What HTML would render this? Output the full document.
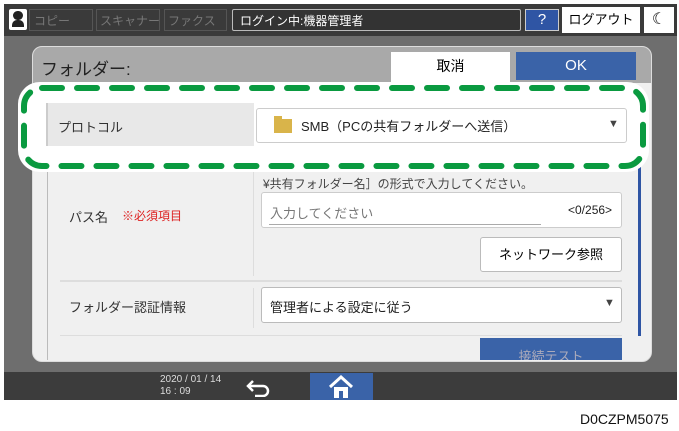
<!DOCTYPE html>
<html><head><meta charset="utf-8"><style>
*{margin:0;padding:0;box-sizing:border-box}
body{width:679px;height:431px;background:#fff;position:relative;overflow:hidden;font-family:"Liberation Sans","Noto Sans CJK JP",sans-serif}
.a{position:absolute}
.t{position:absolute;white-space:nowrap}
</style></head><body>
<div class="a" style="left:4px;top:4px;width:673px;height:396px;background:#6e6e6e"></div>
<!-- top bar -->
<div class="a" style="left:4px;top:4px;width:673px;height:32px;background:#3a3a3a"></div>
<div class="a" style="left:9px;top:9px;width:18px;height:21px;background:#fff;border-radius:2px"></div>
<div class="a" style="left:13px;top:11px;width:10px;height:9px;background:#222;border-radius:5px"></div>
<div class="a" style="left:12px;top:20px;width:12px;height:7px;background:#222;border-radius:5px 5px 0 0"></div>
<div class="a" style="left:29px;top:9px;width:64px;height:22px;border:1px solid #555"></div><div class="t" style="left:34px;top:12px;font-size:12px;color:#777">コピー</div>
<div class="a" style="left:96px;top:9px;width:64px;height:22px;border:1px solid #555"></div><div class="t" style="left:100px;top:12px;font-size:12px;color:#777">スキャナー</div>
<div class="a" style="left:164px;top:9px;width:63px;height:22px;border:1px solid #555"></div><div class="t" style="left:168px;top:12px;font-size:12px;color:#777">ファクス</div>
<div class="a" style="left:232px;top:9px;width:289px;height:22px;border:1px solid #bbb;border-radius:2px;background:#333"></div><div class="t" style="left:240px;top:12px;font-size:12px;color:#fff">ログイン中:機器管理者</div>
<div class="a" style="left:525px;top:9px;width:34px;height:22px;background:#2f55a4;border:1px solid #ccc;color:#fff;font-size:15px;text-align:center;line-height:20px">?</div>
<div class="a" style="left:562px;top:7px;width:78px;height:26px;background:#fff;font-size:13px;text-align:center;line-height:26px">ログアウト</div>
<div class="a" style="left:644px;top:7px;width:30px;height:26px;background:#fff;font-size:16px;text-align:center;line-height:26px">☾</div>
<!-- dialog -->
<div class="a" style="left:32px;top:46px;width:620px;height:316px;background:#f0f0f0;border-radius:10px;border:1px solid #ddd;overflow:hidden">
 <div class="a" style="left:0;top:0;width:620px;height:36px;background:#a9a9a9"></div>
</div>
<div class="t" style="left:41px;top:55px;font-size:17px;color:#222">フォルダー:</div>
<div class="a" style="left:391px;top:52px;width:119px;height:32px;background:#fff;font-size:14px;text-align:center;line-height:28px">取消</div>
<div class="a" style="left:516px;top:52px;width:120px;height:28px;background:#3a63a8;color:#fff;font-size:15px;text-align:center;line-height:28px">OK</div>
<div class="a" style="left:47px;top:140px;width:1px;height:220px;background:#bbb"></div>
<div class="a" style="left:638px;top:150px;width:3px;height:186px;background:#2f55a4"></div>
<div class="a" style="left:253px;top:172px;width:1px;height:104px;background:#ddd"></div>
<div class="t" style="left:263px;top:175px;font-size:12px;color:#444">¥共有フォルダー名］の形式で入力してください。</div>
<div class="a" style="left:261px;top:192px;width:361px;height:36px;background:#fff;border:1px solid #ccc;border-radius:3px"></div>
<div class="t" style="left:270px;top:203px;font-size:13px;color:#777">入力してください</div>
<div class="a" style="left:269px;top:224px;width:272px;height:1px;background:#aaa"></div>
<div class="t" style="left:568px;top:203px;font-size:12px;color:#222">&lt;0/256&gt;</div>
<div class="t" style="left:69px;top:207px;font-size:13px;color:#333">パス名</div>
<div class="t" style="left:122px;top:207px;font-size:12px;color:#d22">※必須項目</div>
<div class="a" style="left:480px;top:237px;width:142px;height:35px;background:#fff;border:1px solid #bbb;border-radius:3px;font-size:13px;text-align:center;line-height:33px">ネットワーク参照</div>
<div class="a" style="left:60px;top:280px;width:562px;height:2px;background:#ddd"></div>
<div class="a" style="left:253px;top:288px;width:1px;height:40px;background:#ddd"></div>
<div class="t" style="left:69px;top:297px;font-size:13px;color:#333">フォルダー認証情報</div>
<div class="a" style="left:261px;top:287px;width:361px;height:36px;background:#fff;border:1px solid #bbb;border-radius:3px"></div>
<div class="t" style="left:270px;top:297px;font-size:13px;color:#222">管理者による設定に従う</div>
<div class="t" style="left:604px;top:297px;font-size:11px;color:#444">▼</div>
<div class="a" style="left:60px;top:335px;width:562px;height:1px;background:#ddd"></div>
<div class="a" style="left:480px;top:338px;width:142px;height:22px;background:#3a63a8;overflow:hidden;color:#aab;font-size:13px;text-align:center;line-height:38px">接続テスト</div>
<!-- highlight -->
<div class="a" style="left:18px;top:82px;width:631px;height:90px;background:#fff;border-radius:22px"></div>
<svg class="a" style="left:18px;top:82px" width="632" height="91"><rect x="6" y="6" width="619" height="78" rx="18" fill="none" stroke="#0a9a40" stroke-width="6" stroke-linecap="round" stroke-dasharray="20 15"/></svg>
<div class="a" style="left:46px;top:103px;width:208px;height:43px;background:#e8e8e8;border-left:2px solid #ccc"></div>
<div class="t" style="left:58px;top:117px;font-size:13px;color:#333">プロトコル</div>
<div class="a" style="left:256px;top:108px;width:371px;height:35px;background:#fff;border:1px solid #ccc;border-radius:3px"></div>
<div class="a" style="left:274px;top:119px;width:18px;height:14px;background:#d9b44a"></div>
<div class="a" style="left:274px;top:116px;width:8px;height:4px;background:#d9b44a"></div>
<div class="t" style="left:301px;top:116px;font-size:13px;color:#222">SMB（PCの共有フォルダーへ送信）</div>
<div class="t" style="left:608px;top:118px;font-size:11px;color:#444">▼</div>
<!-- bottom bar -->
<div class="a" style="left:4px;top:372px;width:673px;height:28px;background:#3c3c3c"></div>
<div class="t" style="left:160px;top:374px;font-size:10px;color:#ddd;line-height:12px">2020 / 01 / 14<br>16 : 09</div>
<svg class="a" style="left:245px;top:377px" width="28" height="20"><path d="M8 4 L3 9 L8 14 M3 9 H18 a5 5 0 0 1 0 10 H10" fill="none" stroke="#fff" stroke-width="2.5"/></svg>
<div class="a" style="left:310px;top:373px;width:63px;height:27px;background:#3a63a8"></div>
<svg class="a" style="left:328px;top:375px" width="26" height="24"><path d="M2 12 L13 2 L24 12" fill="none" stroke="#fff" stroke-width="3"/><path d="M6 12 V23 H11 V16 H15 V23 H20 V12" fill="#fff"/></svg>
<div class="t" style="left:580px;top:411px;font-size:14px;color:#111">D0CZPM5075</div>
</body></html>
